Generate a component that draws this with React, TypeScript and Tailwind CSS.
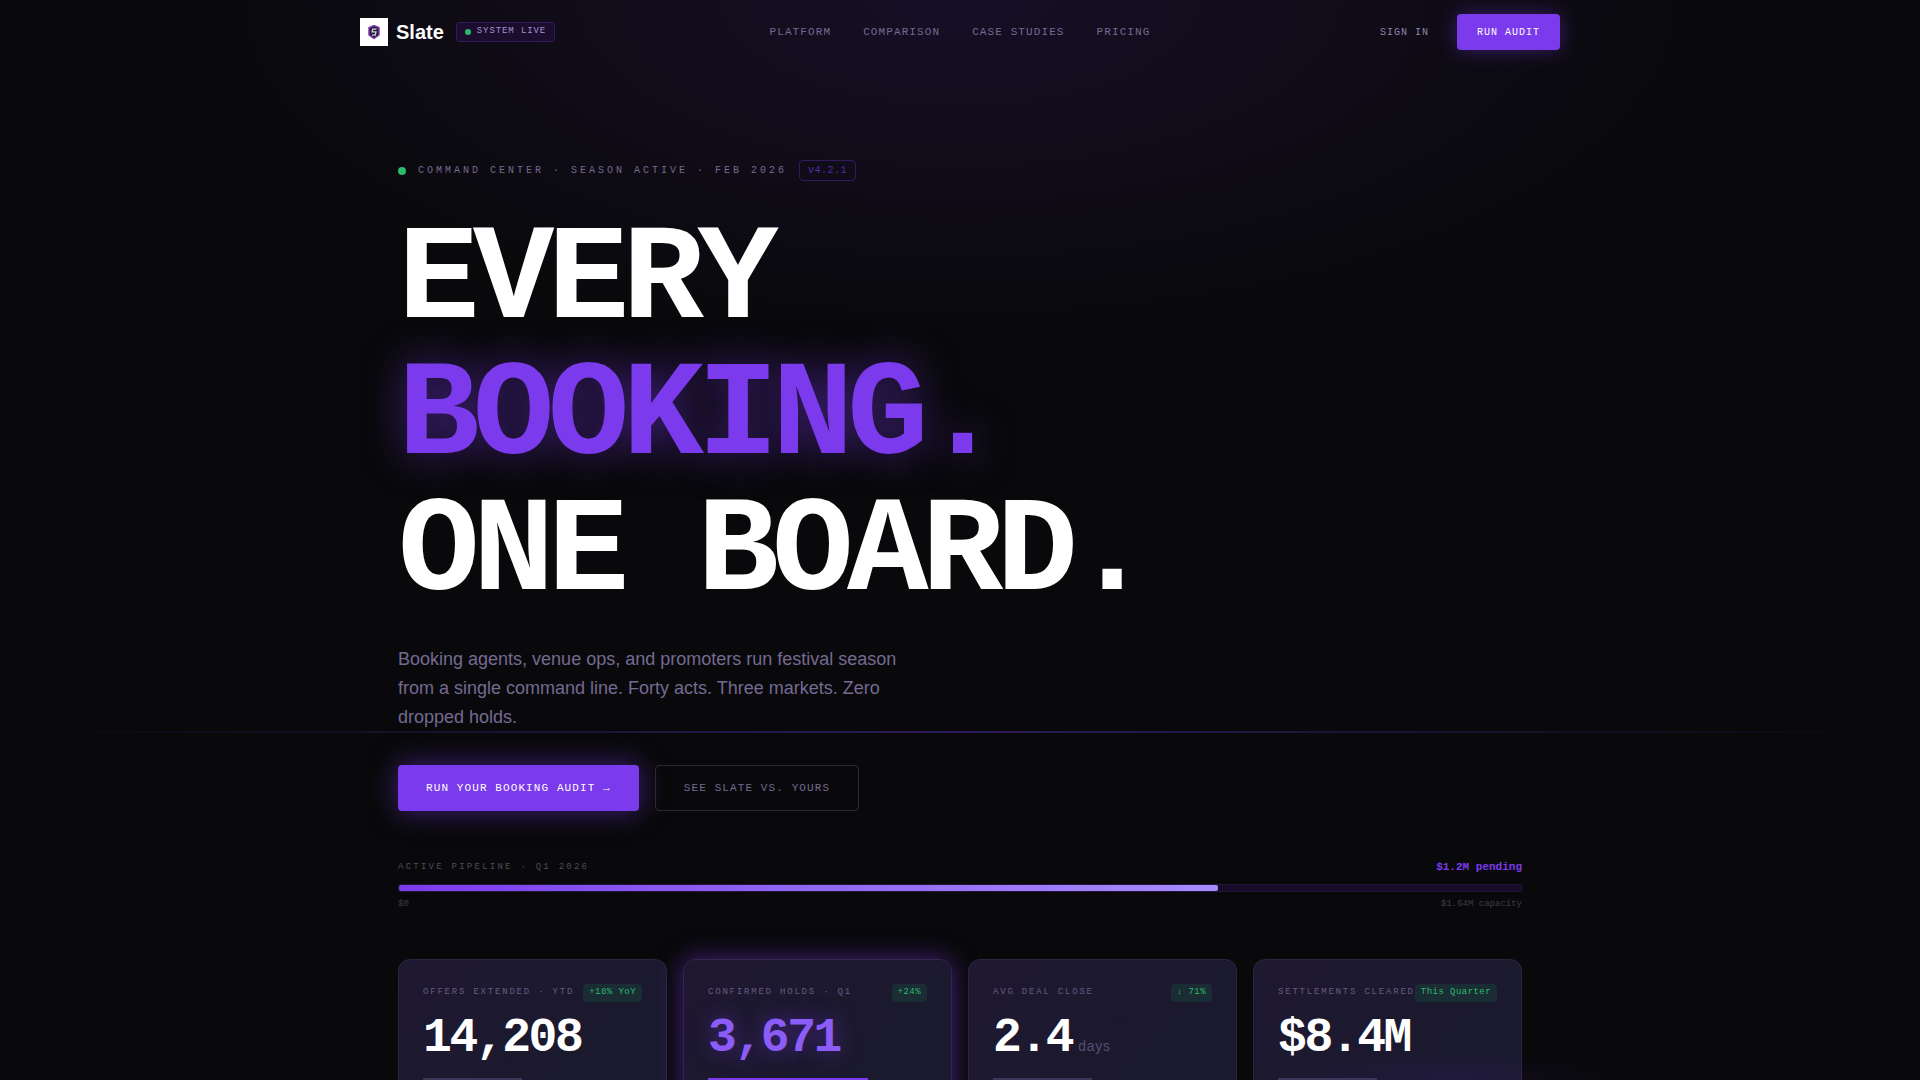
const navLinks = ['Platform', 'Comparison', 'Case Studies', 'Pricing']

const stats = [
    { label: 'Offers Extended · YTD', badge: '+18% YoY', value: '14,208', unit: '', fill: 45, featured: false },
    { label: 'Confirmed Holds · Q1', badge: '+24%', value: '3,671', unit: '', fill: 73, featured: true },
    { label: 'Avg Deal Close', badge: '↓ 71%', value: '2.4', unit: 'days', fill: 45, featured: false },
    { label: 'Settlements Cleared', badge: 'This Quarter', value: '$8.4M', unit: '', fill: 45, featured: false },
]

function Logo(){
    return(
        <span className="flex size-7 items-center justify-center bg-white">
            <svg viewBox="0 0 24 28" className="h-[14px] w-[12px]">
                <path d="M12 1 22 5.5V20L12 27 2 20V5.5Z" fill="#241a3a" stroke="#7c3aad" strokeWidth="3" strokeLinejoin="round"/>
                <path d="M17 8H9.500L8 13.500H16L14.500 20H8" fill="none" stroke="#d8d0e4" strokeWidth="2.500"/>
            </svg>
        </span>
    )
}

function Header(){
    return(
        <header className="mx-auto grid h-16 w-full max-w-[1200px] grid-cols-[1fr_auto_1fr] items-center">
            <div className="flex items-center gap-3">
                <a href="#" className="flex items-center gap-2">
                    <Logo/>
                    <span className="text-xl font-bold text-white">Slate</span>
                </a>
                <div className="flex h-5 items-center gap-1.5 rounded-[3px] border border-[#35195f] bg-[#1a0d2e] px-2">
                    <span className="size-1.5 rounded-full bg-[#2dba6c]"/>
                    <span className="pb-0.5 font-['Liberation_Mono',monospace] text-[9px] leading-3 tracking-widest text-[#a894cf] uppercase">System Live</span>
                </div>
            </div>
            <nav className="flex gap-8 font-['Liberation_Mono',monospace] text-[11px] leading-4 tracking-widest text-[#756a92] uppercase">
                {navLinks.map((link) => (
                    <a key={link} href="#">{link}</a>
                ))}
            </nav>
            <div className="flex items-center justify-end gap-7 font-['Liberation_Mono',monospace] text-[10px] leading-[17px] tracking-widest uppercase">
                <a href="#" className="text-[#8f86a8]">Sign In</a>
                <button className="h-9 rounded-[4px] bg-[#7c3aed] px-5 tracking-widest text-white uppercase shadow-[0_0_20px_rgba(124,58,237,0.4)]">Run Audit</button>
            </div>
        </header>
    )
}

function StatCard({ label, badge, value, unit, fill, featured }: typeof stats[number]){
    return(
        <div className={featured
            ? "min-w-0 rounded-xl border border-[#33254f] bg-linear-135 from-[#1e1830] to-[#1a1a2e] p-6 shadow-[0_0_24px_rgba(124,58,237,0.5)]"
            : "min-w-0 rounded-xl border border-[#2b2640] bg-linear-135 from-[#1e1830] to-[#1a1a2e] p-6"}>
            <div className="flex items-start justify-between font-['Liberation_Mono',monospace] text-[9px] leading-4 whitespace-nowrap">
                <span className="tracking-[0.2em] text-[#665c80] uppercase">{label}</span>
                <span className="h-[18px] rounded-[4px] bg-[#1a2c34] px-1.5 tracking-wider text-[#2dba6c]">{badge}</span>
            </div>
            <div className="mt-3 flex items-baseline gap-1.5">
                <span className={featured
                    ? "font-['Liberation_Mono',monospace] text-5xl leading-12 font-bold tracking-tighter text-[#8b5cf6] [text-shadow:0_0_20px_rgba(124,58,237,0.5)]"
                    : "font-['Liberation_Mono',monospace] text-5xl leading-12 font-bold tracking-tighter text-white"}>{value}</span>
                {unit && <span className="text-sm tracking-wider text-[#564e70]">{unit}</span>}
            </div>
            <div className="mt-4 h-[3px]">
                <div className={featured ? "h-full bg-[#7c3aed]" : "h-full bg-[#3d3658]"} style={{ width: `${fill}%` }}/>
            </div>
        </div>
    )
}

export default function App(){
    return(
        <div className="relative h-screen overflow-hidden bg-[#09090b] bg-[radial-gradient(ellipse_780px_340px_at_50%_0%,rgba(124,58,237,0.12),transparent)] font-['Liberation_Sans',sans-serif]">
            <Header/>
            <main className="mx-auto w-full max-w-[1124px] pt-24">
                <div className="flex items-center gap-3 font-['Liberation_Mono',monospace] text-[10px] leading-[17px]">
                    <span className="size-2 rounded-full bg-[#2dba6c]"/>
                    <span className="tracking-[0.3em] text-[#756a92] uppercase">Command Center · Season Active · Feb 2026</span>
                    <span className="rounded-[4px] border border-[#321a5c] px-2 py-px tracking-wider text-[#552ba6]">v4.2.1</span>
                </div>
                <h1 className="mt-8 font-['Liberation_Mono',monospace] text-[136px] leading-[136px] font-bold tracking-tighter text-white">
                    <span className="block">EVERY</span>
                    <span className="block text-[#7c3aed] [text-shadow:0_0_40px_rgba(124,58,237,0.5)]">BOOKING.</span>
                    <span className="block">ONE BOARD.</span>
                </h1>
                <p className="mt-6 max-w-[520px] text-lg leading-[29px] text-[#756a92]">
                    Booking agents, venue ops, and promoters run festival season from a single command line. Forty acts. Three markets. Zero dropped holds.
                </p>
                <div className="mt-[33px] flex gap-4 font-['Liberation_Mono',monospace] text-[11px] leading-4">
                    <button className="h-[46px] rounded-[4px] bg-[#7c3aed] px-7 tracking-widest text-white uppercase shadow-[0_0_28px_rgba(124,58,237,0.5)]">Run Your Booking Audit →</button>
                    <button className="h-[46px] rounded-[4px] border border-[#2b2a31] px-7 tracking-widest text-[#756a92] uppercase">See Slate vs. Yours</button>
                </div>
                <section className="mt-12 font-['Liberation_Mono',monospace] text-[9px] leading-4">
                    <div className="flex items-center justify-between">
                        <span className="tracking-[0.25em] text-[#504b5a] uppercase">Active Pipeline · Q1 2026</span>
                        <span className="text-[11px] font-bold text-[#7c3aed]">$1.2M pending</span>
                    </div>
                    <div className="mt-[9px] h-2 rounded-[2px] border border-[#24133f] bg-[#160b28]">
                        <div className="h-full rounded-[2px] bg-linear-to-r from-[#7c3aed] to-[#a78bfa]" style={{ width: '73%' }}/>
                    </div>
                    <div className="mt-1 flex justify-between text-[#3f3c46]">
                        <span>$0</span>
                        <span>$1.64M capacity</span>
                    </div>
                </section>
                <section className="mt-[47px] grid grid-cols-4 gap-4">
                    {stats.map((stat) => (
                        <StatCard key={stat.label} {...stat}/>
                    ))}
                </section>
            </main>
            {/* scan line */}
            <div className="pointer-events-none absolute inset-x-[2%] top-[731px] h-0.5 bg-linear-to-r from-transparent via-[#6d3aed]/35 to-transparent"/>
            <div className="pointer-events-none absolute inset-x-0 bottom-0 h-8 bg-[radial-gradient(ellipse_170px_28px_at_76%_100%,rgba(100,30,237,0.08),transparent)]"/>
        </div>
    )
}
